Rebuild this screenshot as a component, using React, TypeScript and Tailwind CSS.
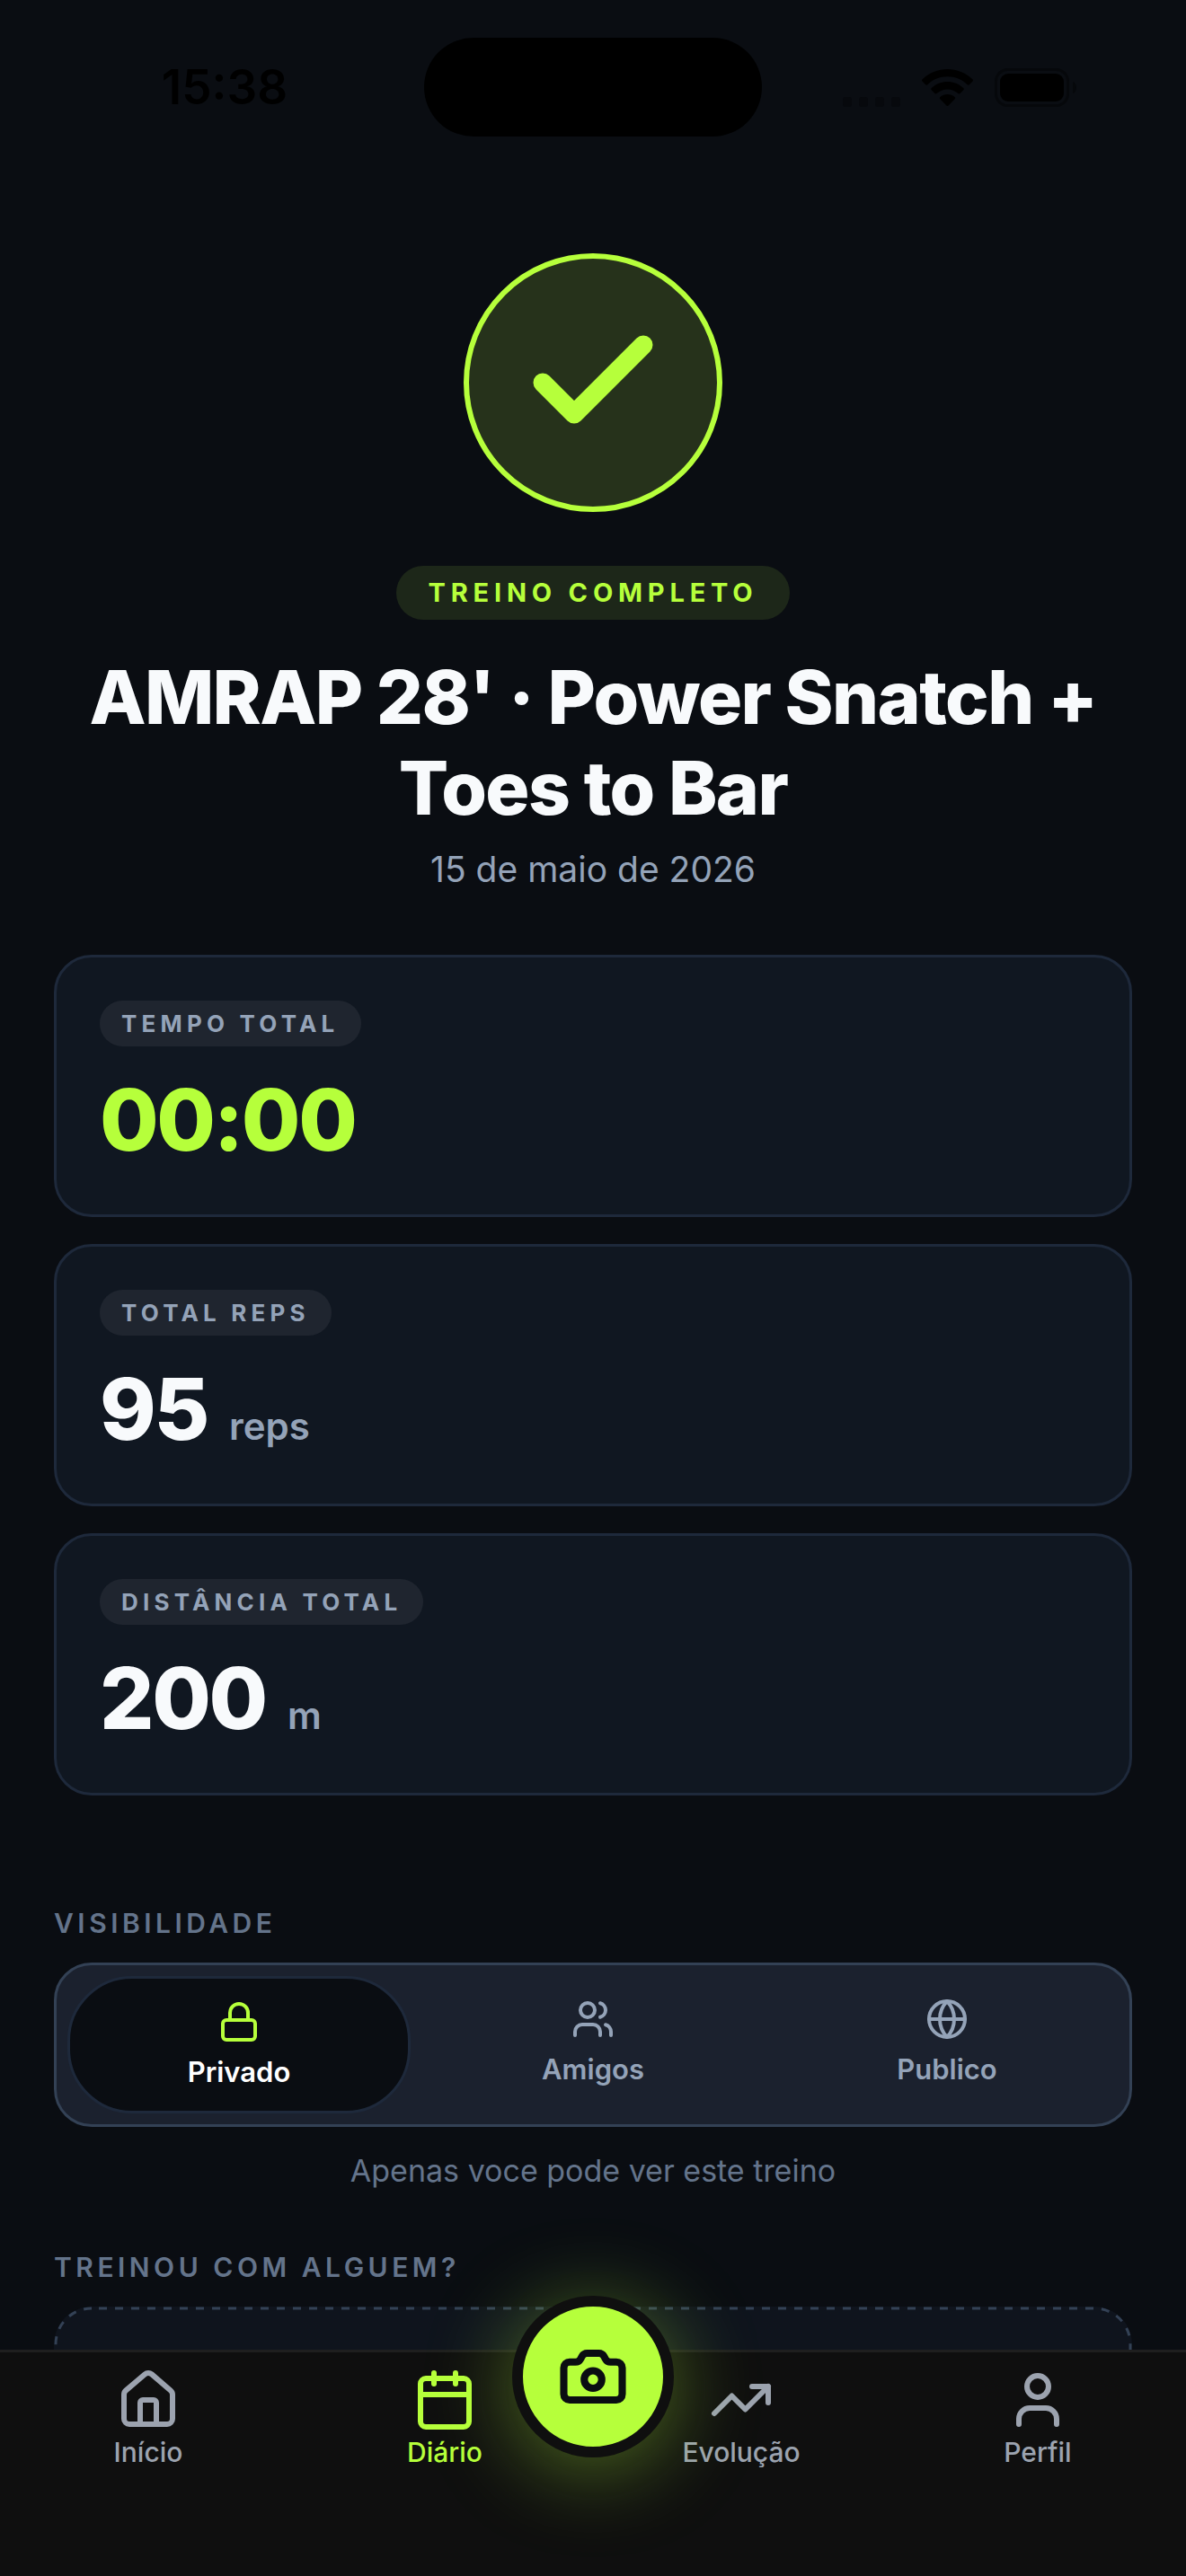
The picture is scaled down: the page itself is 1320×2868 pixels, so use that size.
import {
  Calendar,
  Camera,
  Check,
  Globe,
  House,
  Lock,
  TrendingUp,
  User,
  Users,
} from "lucide-react";
import { useState } from "react";

const stats = [
  { label: "TEMPO TOTAL", value: "00:00", unit: "", highlight: true },
  { label: "TOTAL REPS", value: "95", unit: "reps", highlight: false },
  { label: "DISTÂNCIA TOTAL", value: "200", unit: "m", highlight: false },
];

const visibilityOptions = [
  { id: "privado", label: "Privado", Icon: Lock },
  { id: "amigos", label: "Amigos", Icon: Users },
  { id: "publico", label: "Publico", Icon: Globe },
];

const tabs = [
  { label: "Início", Icon: House, active: false },
  { label: "Diário", Icon: Calendar, active: true },
  { label: "Evolução", Icon: TrendingUp, active: false },
  { label: "Perfil", Icon: User, active: false },
];

function StatusBar() {
  return (
    <div className="grid h-[110px] grid-cols-[1fr_376px_1fr] items-center text-black">
      <div className="pl-7 text-center text-[53px] leading-[60px] font-semibold">
        15:38
      </div>
      <div className="h-full rounded-full bg-black" />
      <div className="flex items-end justify-center gap-6 pr-8">
        <div className="flex gap-2">
          <span className="h-[11px] w-[10px] rounded-[3px] bg-[#07090d]" />
          <span className="h-[11px] w-[10px] rounded-[3px] bg-[#07090d]" />
          <span className="h-[11px] w-[10px] rounded-[3px] bg-[#07090d]" />
          <span className="h-[11px] w-[10px] rounded-[3px] bg-[#07090d]" />
        </div>
        <svg width="57" height="42" viewBox="0 0 57 42" fill="currentColor">
          <path d="M28.5 0C39 0 49 4 56.4 11.2c.7.7.7 1.6.1 2.3l-3.6 3.7c-.6.6-1.5.6-2.2 0C44.7 11.5 37 8.3 28.5 8.3S12.3 11.5 6.3 17.2c-.7.6-1.6.6-2.2 0L.5 13.5c-.6-.7-.6-1.6.1-2.3C8 4 18 0 28.5 0z" />
          <path d="M28.5 14c6.7 0 12.9 2.5 17.7 7 .7.6.7 1.6.1 2.3l-3.7 3.7c-.6.6-1.5.6-2.2.1-3.2-3-7.4-4.7-11.9-4.7s-8.7 1.7-11.9 4.7c-.7.5-1.6.5-2.2-.1l-3.7-3.7c-.6-.7-.6-1.7.1-2.3 4.8-4.5 11-7 17.7-7z" />
          <path d="M28.5 28c3.1 0 5.9 1.1 8.1 3 .7.6.7 1.6.1 2.2l-7.1 7.3c-.6.7-1.6.7-2.2 0l-7.1-7.3c-.6-.6-.6-1.6.1-2.2 2.2-1.9 5-3 8.1-3z" />
        </svg>
        <svg width="92" height="43" viewBox="0 0 92 43">
          <rect x="1.5" y="1.5" width="80" height="40" rx="13" fill="none" stroke="#06080b" strokeWidth="3" />
          <rect x="6" y="6" width="71" height="31" rx="9" fill="#000" />
          <path d="M87 15c3 1 4 4 4 6.500s-1 5.500-4 6.500z" fill="#06080b" />
        </svg>
      </div>
    </div>
  );
}

export default function App() {
  const [visibility, setVisibility] = useState("privado");

  return (
    <div className="flex h-screen flex-col bg-[#0a0d12] font-['Inter',sans-serif] text-[#f8fafc]">
      <main className="min-h-0 flex-1 overflow-hidden pt-[42px]">
        <StatusBar />

        <header className="mt-[130px] flex flex-col items-center px-[60px] text-center">
          <div className="flex size-72 items-center justify-center rounded-full border-6 border-[#b6ff3b] bg-[#26321b]">
            <Check size={168} strokeWidth={3} className="text-[#b6ff3b]" />
          </div>
          <span className="mt-[60px] rounded-full bg-[#1d2719] px-9 text-[29px] leading-[60px] font-bold tracking-[0.2em] text-[#b6ff3b]">
            TREINO COMPLETO
          </span>
          <h1 className="mt-9 text-[82px] leading-[101px] font-extrabold tracking-[-0.02em]">
            AMRAP 28' · Power Snatch + Toes to Bar
          </h1>
          <p className="mt-4 text-[39px] leading-[48px] text-[#94a3b8]">
            15 de maio de 2026
          </p>
        </header>

        <section className="mt-[71px] flex flex-col gap-[30px] px-[60px]">
          {stats.map((stat) => (
            <div
              key={stat.label}
              className="flex flex-col items-start gap-6 rounded-[42px] border-3 border-[#1e293b] bg-[#101721] p-12"
            >
              <span className="rounded-full bg-[#1f252f] px-6 text-[26px] leading-[51px] font-bold tracking-[0.2em] text-[#94a3b8]">
                {stat.label}
              </span>
              <p
                className={`flex items-baseline gap-6 text-[95px] leading-[115px] font-extrabold tracking-tight ${
                  stat.highlight ? "text-[#b6ff3b]" : "text-[#f8fafc]"
                }`}
              >
                {stat.value}
                {stat.unit && (
                  <span className="text-[42px] leading-[48px] font-semibold tracking-normal text-[#94a3b8]">
                    {stat.unit}
                  </span>
                )}
              </p>
            </div>
          ))}
        </section>

        <section className="mt-[124px] px-[60px]">
          <h2 className="text-[30px] leading-9 font-semibold tracking-[0.15em] text-[#64748b]">
            VISIBILIDADE
          </h2>
          <div
            role="radiogroup"
            aria-label="Visibilidade"
            className="mt-[26px] grid grid-cols-3 gap-3 rounded-[42px] border-3 border-[#334155] bg-[#1b212e] p-3"
          >
            {visibilityOptions.map(({ id, label, Icon }) => {
              const selected = visibility === id;
              return (
                <label
                  key={id}
                  className={`relative flex flex-col items-center gap-3 rounded-[72px] py-6 text-[31px] leading-[39px] font-semibold ${
                    selected
                      ? "border-3 border-[#1e293b] bg-[#0a0d12] text-white"
                      : "text-[#94a3b8]"
                  }`}
                >
                  <input
                    type="radio"
                    name="visibility"
                    value={id}
                    checked={selected}
                    onChange={() => setVisibility(id)}
                    className="sr-only"
                  />
                  <Icon
                    size={48}
                    className={selected ? "text-[#b6ff3b]" : "text-[#94a3b8]"}
                  />
                  {label}
                </label>
              );
            })}
          </div>
          <p className="mt-7 text-center text-[34px] leading-[42px] text-[#64748b]">
            Apenas voce pode ver este treino
          </p>
        </section>

        <section className="mt-[68px] px-[60px]">
          <h2 className="text-[30px] leading-9 font-semibold tracking-[0.15em] text-[#64748b]">
            TREINOU COM ALGUEM?
          </h2>
          <div className="relative mt-[26px] h-48 rounded-[42px] bg-[#0f141d]">
            <svg className="absolute inset-0 size-full overflow-visible p-[2px]">
              <rect
                width="100%"
                height="100%"
                rx="40"
                fill="none"
                stroke="#334155"
                strokeWidth="3"
                strokeDasharray="9 9"
                strokeDashoffset="-8"
              />
            </svg>
          </div>
        </section>
      </main>

      <nav className="relative h-[252px] shrink-0 border-t-3 border-[#1f1f1f] bg-[#0f0f0f] pt-[17px]">
        <div className="grid grid-cols-4">
          {tabs.map(({ label, Icon, active }) => (
            <a
              key={label}
              href="#"
              aria-current={active ? "page" : undefined}
              className={`flex flex-col items-center gap-1 text-[30px] leading-9 font-medium ${
                active ? "text-[#b6ff3b]" : "text-[#9ca3af]"
              }`}
            >
              <Icon size={72} />
              {label}
            </a>
          ))}
        </div>
        <button
          type="button"
          aria-label="Câmera"
          className="absolute -top-[63px] left-1/2 flex size-[180px] -translate-x-1/2 items-center justify-center rounded-full border-12 border-[#0f0f0f] bg-[#b6ff3b] text-[#0a0d12] shadow-[0_12px_96px_rgba(182,255,59,0.4)]"
        >
          <Camera size={78} strokeWidth={2.5} />
        </button>
      </nav>
    </div>
  );
}
